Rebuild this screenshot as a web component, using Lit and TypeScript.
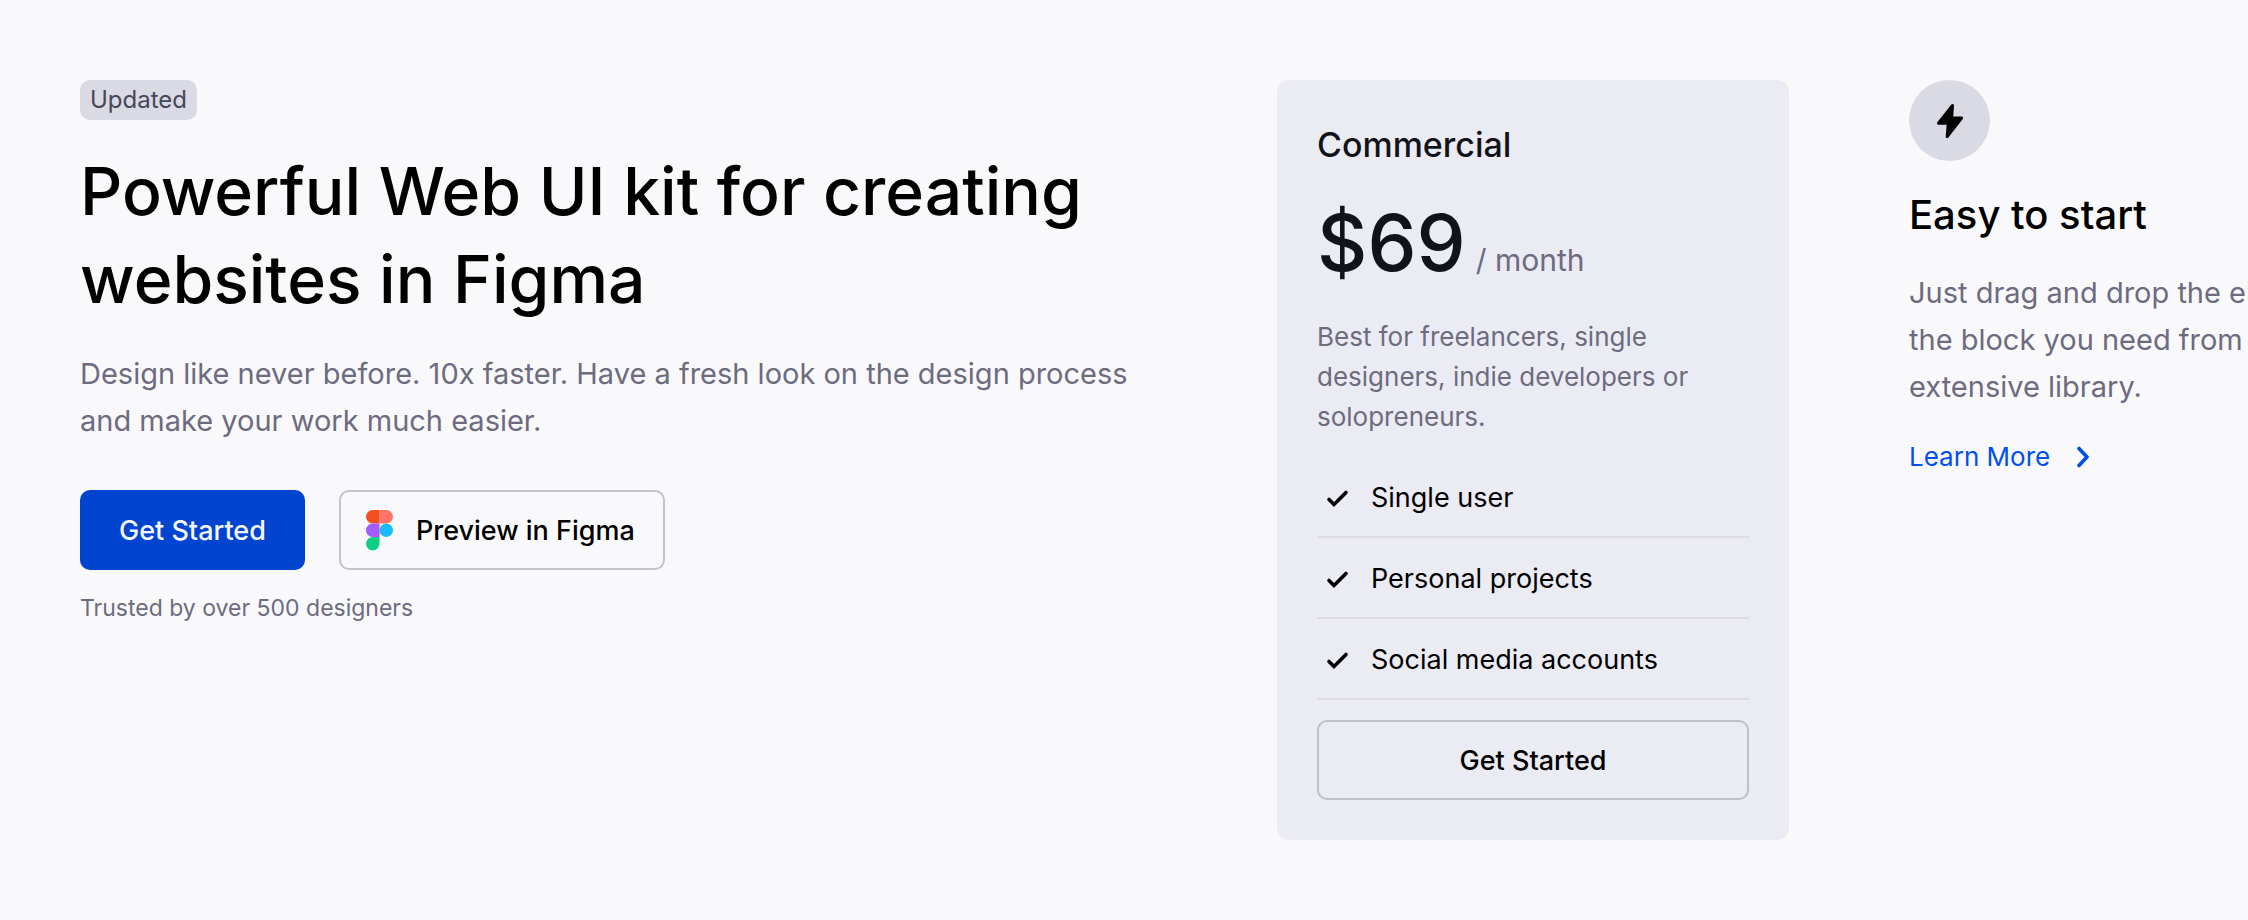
import { LitElement, html, css, svg } from "lit";
import { customElement, property } from "lit/decorators.js";

const shared = css`
  *,
  *::before,
  *::after {
    box-sizing: border-box;
  }
  h1,
  h2,
  p,
  ul {
    margin: 0;
    padding: 0;
    font-weight: 400;
  }
  h1,
  h2 {
    font-weight: 500;
  }
  button {
    display: inline-flex;
    align-items: center;
    justify-content: center;
    height: 80px;
    margin: 0;
    border: 2px solid #c3c3cb;
    border-radius: 10px;
    background: transparent;
    color: #000;
    font: inherit;
    font-size: 27px;
    font-weight: 500;
    cursor: pointer;
  }
`;

const figmaLogo = svg`
  <path d="M0 6.75A6.75 6.75 0 0 1 6.75 0H13.5V13.5H6.75A6.75 6.75 0 0 1 0 6.75Z" fill="#f4501f" />
  <path d="M13.5 0H20.25A6.75 6.75 0 0 1 20.25 13.5H13.5Z" fill="#ff7466" />
  <path d="M0 20.25A6.75 6.75 0 0 1 6.75 13.5H13.5V27H6.75A6.75 6.75 0 0 1 0 20.25Z" fill="#a35cff" />
  <circle cx="20.25" cy="20.25" r="6.75" fill="#1bbcfe" />
  <path d="M6.75 27H13.5V33.75A6.75 6.75 0 1 1 6.75 27Z" fill="#0dcf84" />
`;

@customElement("hero-intro")
class HeroIntro extends LitElement {
  static styles = [
    shared,
    css`
      :host {
        display: block;
      }
      .badge {
        display: inline-block;
        padding: 0 10px;
        border-radius: 10px;
        background: #dadae5;
        color: #48475a;
        font-size: 24px;
        line-height: 40px;
        vertical-align: top;
      }
      .title {
        margin-top: 27px;
        font-size: 66px;
        line-height: 88px;
        color: #000;
      }
      .lead {
        margin-top: 27px;
        font-size: 29px;
        line-height: 47px;
        color: #6d6b80;
      }
      .actions {
        display: flex;
        flex-wrap: wrap;
        gap: 34px;
        margin-top: 46px;
      }
      .primary {
        padding: 0 39px;
        border: 0;
        background: #0044cf;
        color: #f5f8ff;
      }
      .preview {
        gap: 23px;
        padding: 0 28px 0 25px;
      }
      .logo {
        display: block;
        width: 27px;
        height: 41px;
      }
      .note {
        margin-top: 20px;
        font-size: 23px;
        line-height: 36px;
        color: #6d6b80;
      }
    `,
  ];

  render() {
    return html`
      <span class="badge">Updated</span>
      <h1 class="title">Powerful Web UI kit for creating websites in Figma</h1>
      <p class="lead">
        Design like never before. 10x faster. Have a fresh look on the design process and make your work much easier.
      </p>
      <div class="actions">
        <button class="primary" type="button">Get Started</button>
        <button class="preview" type="button">
          <svg class="logo" viewBox="0 0 27 41" aria-hidden="true">${figmaLogo}</svg>
          Preview in Figma
        </button>
      </div>
      <p class="note">Trusted by over 500 designers</p>
    `;
  }
}

@customElement("pricing-card")
class PricingCard extends LitElement {
  @property({ type: String }) plan = "";
  @property({ type: String }) price = "";
  @property({ type: Array }) features: string[] = [];

  static styles = [
    shared,
    css`
      :host {
        display: block;
        padding: 40px;
        border-radius: 12px;
        background: #ebebf4;
      }
      .plan {
        font-size: 34px;
        line-height: 50px;
        color: #12131a;
      }
      .price {
        display: flex;
        align-items: baseline;
        gap: 10px;
        margin-top: 23px;
      }
      .amount {
        font-size: 78px;
        font-weight: 500;
        line-height: 100px;
        color: #12131a;
      }
      .period {
        font-size: 30px;
        line-height: 40px;
        color: #6d6b80;
      }
      .about {
        margin-top: 24px;
        font-size: 26px;
        line-height: 40px;
        color: #6d6b80;
      }
      .features {
        margin-top: 20px;
        list-style: none;
      }
      .feature {
        display: flex;
        align-items: center;
        gap: 14px;
        height: 81px;
        padding-top: 2px;
        border-bottom: 2px solid #dcdce2;
        font-size: 27px;
        color: #000;
      }
      .check {
        display: block;
        width: 40px;
        height: 40px;
        fill: none;
        stroke: #000;
        stroke-width: 3.6;
        stroke-linecap: round;
      }
      .choose {
        width: 100%;
        margin-top: 20px;
        border-color: #bfbfc7;
      }
    `,
  ];

  render() {
    return html`
      <h2 class="plan">${this.plan}</h2>
      <div class="price">
        <span class="amount">${this.price}</span>
        <span class="period">/ month</span>
      </div>
      <p class="about">Best for freelancers, single designers, indie developers or solopreneurs.</p>
      <ul class="features">
        ${this.features.map(
          (name) => html`
            <li class="feature">
              <svg class="check" viewBox="0 0 40 40" aria-hidden="true">
                <path d="M12 21.5L17 26.5L29 14.5" />
              </svg>
              ${name}
            </li>
          `
        )}
      </ul>
      <button class="choose" type="button">Get Started</button>
    `;
  }
}

@customElement("feature-note")
class FeatureNote extends LitElement {
  static styles = [
    shared,
    css`
      :host {
        display: block;
      }
      .mark {
        display: flex;
        align-items: center;
        justify-content: center;
        width: 81px;
        height: 81px;
        border-radius: 50%;
        background: #dadae5;
      }
      .bolt {
        display: block;
        width: 28px;
        height: 36px;
        stroke: #000;
        stroke-width: 3;
        stroke-linejoin: round;
      }
      .title {
        margin-top: 26px;
        font-size: 40px;
        line-height: 56px;
        color: #000;
      }
      .text {
        margin-top: 26px;
        font-size: 29px;
        line-height: 47px;
        color: #6d6b80;
      }
      .more {
        display: inline-flex;
        align-items: center;
        gap: 26px;
        margin-top: 27px;
        font-size: 26px;
        line-height: 40px;
        color: #0050f0;
        text-decoration: none;
      }
      .arrow {
        display: block;
        width: 14px;
        height: 22px;
        fill: none;
        stroke: #0050e6;
        stroke-width: 3.6;
        stroke-linecap: round;
        stroke-linejoin: round;
      }
    `,
  ];

  render() {
    return html`
      <div class="mark">
        <svg class="bolt" viewBox="0 0 28 36" aria-hidden="true">
          <path d="M16.5 2.5L2.5 20.2H12.3L11.2 33.5L25.6 15H15.6Z" />
        </svg>
      </div>
      <h2 class="title">Easy to start</h2>
      <p class="text">Just drag and drop the element or the block you need from our extensive library.</p>
      <a class="more" href="#">
        Learn More
        <svg class="arrow" viewBox="0 0 14 22" aria-hidden="true"><path d="M3 2.5L11 11L3 19.5" /></svg>
      </a>
    `;
  }
}

@customElement("app-root")
class AppRoot extends LitElement {
  static styles = css`
    :host {
      display: block;
      box-sizing: border-box;
      min-height: 100vh;
      overflow: hidden;
      padding: 80px 0 80px 80px;
      background: #f9f9fc;
      font-family: Inter, "Liberation Sans", sans-serif;
    }
    .row {
      display: grid;
      grid-template-columns: minmax(0, 1fr) 512px 339px;
      gap: 120px;
      align-items: start;
    }
    .aside {
      width: 512px;
    }
  `;

  render() {
    return html`
      <main class="row">
        <hero-intro></hero-intro>
        <pricing-card
          plan="Commercial"
          price="$69"
          .features=${["Single user", "Personal projects", "Social media accounts"]}
        ></pricing-card>
        <feature-note class="aside"></feature-note>
      </main>
    `;
  }
}
